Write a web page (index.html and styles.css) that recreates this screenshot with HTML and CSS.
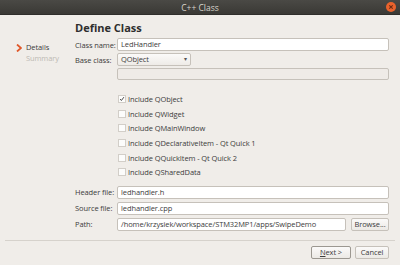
FILE: index.html
```html
<!DOCTYPE html>
<html>
<head>
<meta charset="utf-8">
<link rel="stylesheet" href="styles.css">
</head>
<body>
<div class="window">
  <div class="titlebar">
    <span class="title">C++ Class</span>
    <span class="close"><svg width="10" height="10" viewBox="0 0 10 10"><circle cx="5" cy="5" r="5" fill="#e9622c"/><path d="M3.3 3.3 L6.7 6.7 M6.7 3.3 L3.3 6.7" stroke="#6b2a12" stroke-width="1.1"/></svg></span>
  </div>
  <div class="main">
    <div class="sidebar">
      <div class="step active"><svg class="arrow" width="6" height="8" viewBox="0 0 6 8"><path d="M1 0.5 L5 4 L1 7.5" fill="none" stroke="#e0582a" stroke-width="1.8"/></svg>Details</div>
      <div class="step inactive">Summary</div>
    </div>
    <div class="content">
      <div class="heading">Define Class</div>
      <div class="form top">
        <label class="lbl">Class name:</label>
        <div class="input">LedHandler</div>
        <label class="lbl">Base class:</label>
        <div class="combo-row"><div class="combo">QObject<span class="caret">▾</span></div></div>
        <span></span>
        <div class="input disabled"></div>
      </div>
      <div class="checks">
        <div class="check"><span class="box"><svg width="8" height="8" viewBox="0 0 8 8"><path d="M1.5 4 L3.2 6 L6.5 1.5" fill="none" stroke="#3c3c3c" stroke-width="1.2"/></svg></span>Include QObject</div>
        <div class="check"><span class="box"></span>Include QWidget</div>
        <div class="check"><span class="box"></span>Include QMainWindow</div>
        <div class="check"><span class="box"></span>Include QDeclarativeItem - Qt Quick 1</div>
        <div class="check"><span class="box"></span>Include QQuickItem - Qt Quick 2</div>
        <div class="check"><span class="box"></span>Include QSharedData</div>
      </div>
      <div class="form bottom">
        <label class="lbl">Header file:</label>
        <div class="input">ledhandler.h</div>
        <label class="lbl">Source file:</label>
        <div class="input">ledhandler.cpp</div>
        <label class="lbl">Path:</label>
        <div class="path-row">
          <div class="input path">/home/krzysiek/workspace/STM32MP1/apps/SwipeDemo</div>
          <div class="btn browse">Browse...</div>
        </div>
      </div>
    </div>
  </div>
  <div class="footer">
    <div class="btn next"><u>N</u>ext &gt;</div>
    <div class="btn cancel">Cancel</div>
  </div>
</div>
</body>
</html>
```

FILE: styles.css
```css
* { box-sizing: border-box; }
html, body { margin: 0; padding: 0; }
body {
  width: 400px;
  height: 265px;
  overflow: hidden;
  background: #f0ede9;
  font-family: "Open Sans", "DejaVu Sans", sans-serif;
  font-size: 7.5px;
  letter-spacing: -0.1px;
  color: #3c3c3c;
}
.window { width: 400px; height: 265px; display: flex; flex-direction: column; }
.titlebar {
  height: 15px;
  background: linear-gradient(#4a4945, #3a3935);
  border-bottom: 1px solid #2f2e2b;
  display: flex;
  align-items: center;
  justify-content: center;
  position: relative;
}
.title { color: #d8d4cc; font-size: 8.5px; letter-spacing: 0; }
.close { position: absolute; right: 4px; top: 2px; height: 10px; line-height: 0; }
.main { display: flex; flex: 1; }
.sidebar { width: 75px; padding: 27px 0 0 16px; }
.step { height: 11px; line-height: 11px; display: flex; align-items: center; }
.step.active { color: #3c3c3c; }
.step.inactive { color: #bdb9b3; padding-left: 10px; }
.arrow { margin-right: 4px; }
.content { flex: 1; padding: 0 11px 0 0; display: flex; flex-direction: column; }
.heading { font-size: 11px; letter-spacing: 0; font-weight: bold; color: #2e2e2e; margin-top: 5px; height: 15px; line-height: 15px; }
.form { display: grid; grid-template-columns: 42px 1fr; row-gap: 2px; align-items: center; }
.form.top { margin-top: 3px; }
.lbl { white-space: nowrap; color: #3c3c3c; }
.input {
  height: 13px;
  line-height: 11px;
  background: #ffffff;
  border: 1px solid #c6c1ba;
  border-radius: 2px;
  padding: 0 3px;
  color: #3c3c3c;
  white-space: nowrap;
  overflow: hidden;
}
.input.disabled { background: #efebe7; height: 12px; }
.combo-row { display: flex; }
.combo {
  width: 74px;
  height: 13px;
  line-height: 11px;
  border: 1px solid #c6c1ba;
  border-radius: 2px;
  background: linear-gradient(#fbfaf9, #eeebe7);
  padding: 0 3px;
  display: flex;
  justify-content: space-between;
}
.caret { font-size: 6px; color: #555; }
.checks { margin-top: 12px; margin-left: 43px; display: flex; flex-direction: column; }
.check { height: 14.6px; display: flex; align-items: center; }
.box {
  width: 8px; height: 8px;
  border: 1px solid #d2cec8;
  background: #fcfcfb;
  margin-right: 2px;
  display: flex; align-items: center; justify-content: center;
}
.box svg { display: block; }
.form.bottom { margin-top: 6px; row-gap: 3px; }
.path-row { display: flex; gap: 5px; }
.path { flex: 1; }
.btn {
  height: 13px;
  line-height: 11px;
  border: 1px solid #c6c1ba;
  border-radius: 2px;
  background: linear-gradient(#fbfaf9, #ece9e5);
  text-align: center;
  color: #3c3c3c;
}
.browse { width: 38px; }
.footer {
  margin: 0 5px;
  border-top: 1px solid #d6d2cc;
  height: 25px;
  display: flex;
  justify-content: flex-end;
  align-items: flex-start;
  padding: 5px 6px 0 0;
  gap: 4px;
}
.next { width: 40px; border-color: #9c9891; }
.cancel { width: 34px; }
```
